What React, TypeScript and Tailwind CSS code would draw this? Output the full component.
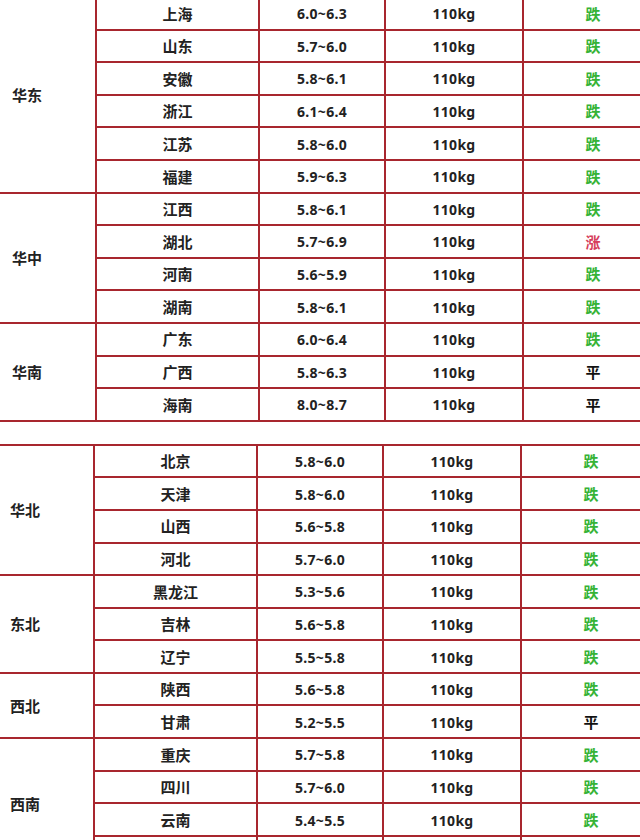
import React from "react";

interface Row {
  name: string;
  price: string;
  weight: string;
  trend: "跌" | "涨" | "平" | "";
}

interface Group {
  region: string;
  rows: Row[];
}

const r = (name: string, price: string, trend: Row["trend"] = "跌"): Row => ({
  name,
  price,
  weight: "110kg",
  trend,
});

const topTable: Group[] = [
  {
    region: "华东",
    rows: [
      r("上海", "6.0~6.3"),
      r("山东", "5.7~6.0"),
      r("安徽", "5.8~6.1"),
      r("浙江", "6.1~6.4"),
      r("江苏", "5.8~6.0"),
      r("福建", "5.9~6.3"),
    ],
  },
  {
    region: "华中",
    rows: [
      r("江西", "5.8~6.1"),
      r("湖北", "5.7~6.9", "涨"),
      r("河南", "5.6~5.9"),
      r("湖南", "5.8~6.1"),
    ],
  },
  {
    region: "华南",
    rows: [r("广东", "6.0~6.4"), r("广西", "5.8~6.3", "平"), r("海南", "8.0~8.7", "平")],
  },
];

// last row of 西南 runs off the bottom of the picture, so its cells stay empty
const bottomTable: Group[] = [
  {
    region: "华北",
    rows: [r("北京", "5.8~6.0"), r("天津", "5.8~6.0"), r("山西", "5.6~5.8"), r("河北", "5.7~6.0")],
  },
  {
    region: "东北",
    rows: [r("黑龙江", "5.3~5.6"), r("吉林", "5.6~5.8"), r("辽宁", "5.5~5.8")],
  },
  {
    region: "西北",
    rows: [r("陕西", "5.6~5.8"), r("甘肃", "5.2~5.5", "平")],
  },
  {
    region: "西南",
    rows: [
      r("重庆", "5.7~5.8"),
      r("四川", "5.7~6.0"),
      r("云南", "5.4~5.5"),
      { name: "", price: "", weight: "", trend: "" },
    ],
  },
];

const trendColor = {
  跌: "text-[#36b336]",
  涨: "text-[#d63e5c]",
  平: "text-[#111111]",
  "": "",
};

function PriceTable({ groups, top }: { groups: Group[]; top?: boolean }) {
  return (
    <div className={top ? "flex flex-col w-[680px]" : "flex flex-col w-[680px] -ml-[2px] border-t-2 border-[#a8262e]"}>
      {groups.map((g) => (
        <div key={g.region} className="flex">
          <div className="w-[95px] shrink-0 flex items-center pl-[12px] pt-[1px] border-b-2 border-[#a8262e] text-[15px] font-bold text-[#222]">
            {g.region}
          </div>
          <div className="flex flex-col">
            {g.rows.map((row, i) => (
              <div key={i} className="flex h-[32.6px] border-b-2 border-[#a8262e]">
                <div className="w-[163px] flex items-center justify-center pt-[1px] border-l-2 border-[#a8262e] text-[15px] font-bold text-[#222]">
                  {row.name}
                </div>
                <div className="w-[126px] flex items-center justify-center pt-[1px] border-l-2 border-[#a8262e] text-[14px] font-bold text-[#222] tracking-[0.3px]">
                  {row.price}
                </div>
                <div className="w-[138px] flex items-center justify-center pt-[1px] border-l-2 border-[#a8262e] text-[14px] font-bold text-[#222] tracking-[0.3px]">
                  {row.weight}
                </div>
                <div
                  className={`w-[140px] flex items-center justify-center pt-[1px] border-l-2 border-[#a8262e] text-[15px] font-bold ${trendColor[row.trend]}`}
                >
                  {row.trend}
                </div>
              </div>
            ))}
          </div>
        </div>
      ))}
    </div>
  );
}

export default function App() {
  return (
    <div
      className="w-[640px] h-[840px] overflow-hidden bg-white"
      style={{ fontFamily: '"Noto Sans", "Noto Sans CJK SC", sans-serif' }}
    >
      <div className="-mt-[2px]">
        <PriceTable groups={topTable} top />
      </div>
      <div className="mt-[22px]">
        <PriceTable groups={bottomTable} />
      </div>
    </div>
  );
}
